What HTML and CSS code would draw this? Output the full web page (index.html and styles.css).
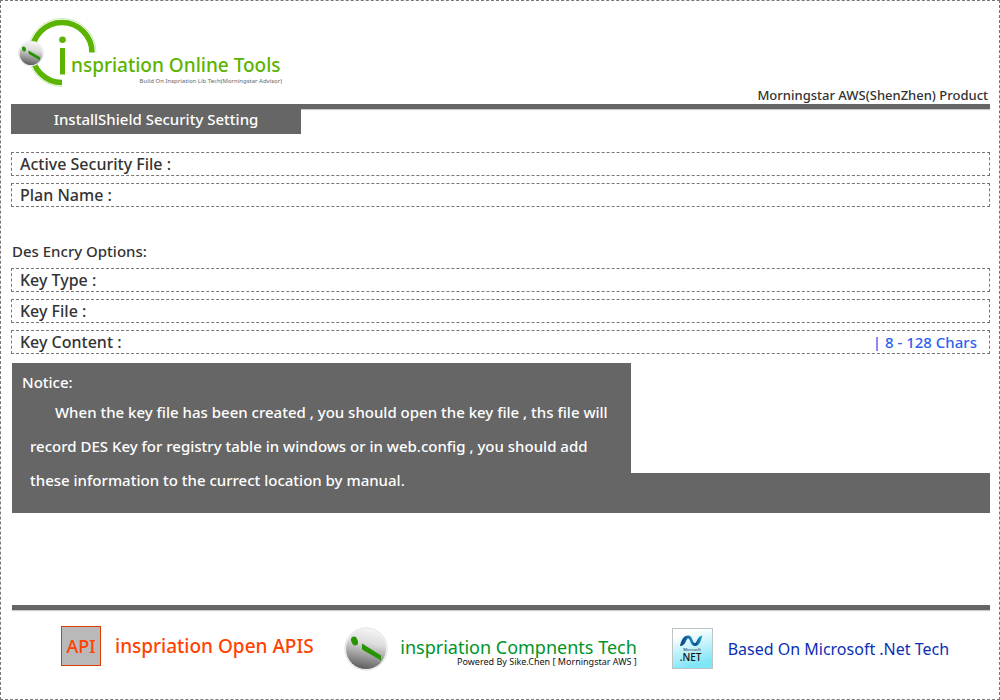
FILE: index.html
```html
<!DOCTYPE html>
<html lang="en">
<head>
<meta charset="utf-8">
<title>Inspriation Online Tools</title>
<link rel="stylesheet" href="styles.css">
</head>
<body>
<div class="page">
  <header class="header">
    <svg class="logo" width="290" height="80" viewBox="10 12 290 80" role="img" aria-label="Inspriation Online Tools">
      <defs>
        <linearGradient id="ball" x1="0.6" y1="0" x2="0.4" y2="1">
          <stop offset="0" stop-color="#f4f4f4"/>
          <stop offset="0.35" stop-color="#dcdcdc"/>
          <stop offset="1" stop-color="#5c5c5c"/>
        </linearGradient>
      </defs>
      <path d="M96 52.500A34 34 0 1 0 62 86.500" fill="none" stroke="#c9e8b4" stroke-width="1"/>
      <path d="M92 52.500A30 30 0 1 0 62 82.500" fill="none" stroke="#5ab400" stroke-width="5.500"/>
      <circle cx="62.500" cy="39.800" r="3.300" fill="#5ab400"/>
      <rect x="60" y="48" width="5" height="26.500" fill="#5ab400"/>
      <circle cx="31" cy="53.500" r="12.500" fill="#fff" stroke="#ddd" stroke-width="0.700"/>
      <circle cx="31" cy="53.500" r="11.500" fill="url(#ball)"/>
      <ellipse cx="24" cy="49" rx="1.900" ry="2.600" fill="#259400" transform="rotate(-20 24 49)"/>
      <path d="M28.500 50.500l11.500 6.700v3.200l-11.500-6.700z" fill="#259400"/>
      <text class="logo-name" x="71" y="72">nspriation Online Tools</text>
      <text class="logo-tag" x="282" y="83" text-anchor="end">Build On Inspriation Lib Tech(Morningstar Advisor)</text>
    </svg>
    <p class="product">Morningstar AWS(ShenZhen) Product</p>
  </header>

  <div class="rule"></div>
  <h1 class="tab">InstallShield Security Setting</h1>

  <form class="form">
    <div class="row"><label for="active-file">Active Security File :</label><input id="active-file" type="text"></div>
    <div class="row"><label for="plan-name">Plan Name :</label><input id="plan-name" type="text"></div>
    <h2 class="group">Des Encry Options:</h2>
    <div class="row"><label for="key-type">Key Type :</label><input id="key-type" type="text"></div>
    <div class="row"><label for="key-file">Key File :</label><input id="key-file" type="text"></div>
    <div class="row"><label for="key-content">Key Content :</label><input id="key-content" type="text"><span class="hint">| 8 - 128 Chars</span></div>
  </form>

  <section class="notice">
    <div class="notice-body">
      <h2 class="notice-title">Notice:</h2>
      <p class="notice-text">When the key file has been created , you should open the key file , ths file will<br>record DES Key for registry table in windows or in web.config , you should add<br>these information to the currect location by manual.</p>
    </div>
    <div class="notice-foot"></div>
  </section>

  <footer class="footer">
    <div class="rule"></div>
    <div class="brands">
      <div class="brand">
        <span class="api-icon">API</span>
        <span class="api-name">inspriation Open APIS</span>
      </div>
      <div class="brand">
        <svg width="44" height="44" viewBox="0 0 44 44" aria-hidden="true">
          <circle cx="22" cy="22" r="21.200" fill="#f4f4f4" stroke="#ddd" stroke-width="0.800"/>
          <circle cx="22" cy="22" r="20" fill="url(#ball)"/>
          <ellipse cx="10.500" cy="14" rx="3.200" ry="4.600" fill="#259400" transform="rotate(-20 10.500 14)"/>
          <path d="M18 16.500l19 12v5l-19-11z" fill="#259400"/>
        </svg>
        <div class="comp">
          <span class="comp-name">inspriation Compnents Tech</span>
          <span class="comp-by">Powered By Sike.Chen [ Morningstar AWS ]</span>
        </div>
      </div>
      <div class="brand">
        <svg width="42" height="42" viewBox="0 0 42 42" aria-hidden="true">
          <defs>
            <linearGradient id="tile" x1="0" y1="0" x2="0.300" y2="1">
              <stop offset="0.200" stop-color="#fff"/>
              <stop offset="1" stop-color="#7fe6f7"/>
            </linearGradient>
            <linearGradient id="wave" x1="0" y1="0" x2="1" y2="0">
              <stop offset="0" stop-color="#0a3c7c"/>
              <stop offset="0.500" stop-color="#1d86b8"/>
              <stop offset="0.700" stop-color="#0a4b8c"/>
              <stop offset="1" stop-color="#2cb0cc"/>
            </linearGradient>
          </defs>
          <rect x="0.500" y="0.500" width="40" height="40" fill="url(#tile)" stroke="#bcc4c6"/>
          <path d="M8 18C9.500 12 11.500 7.500 16 7.500c5 0 4 7.500 7 7.500 2 0 2-6.500 7.500-7.500C29 12 28 18 23 18c-5 0-4.500-7.500-7-7.500-2 0-2 7.500-8 7.500z" fill="url(#wave)"/>
          <text class="net-ms" x="20" y="23" text-anchor="middle">Microsoft</text>
          <text class="net-name" x="18.500" y="33" text-anchor="middle">.NET</text>
        </svg>
        <span class="net-label">Based On Microsoft .Net Tech</span>
      </div>
    </div>
  </footer>
</div>
</body>
</html>
```
FILE: styles.css
```css
* { box-sizing: border-box; }

body {
  margin: 0;
  background: #fff;
  color: #333;
  font-family: "Noto Sans", "Open Sans", sans-serif;
}

h1, h2, p { margin: 0; }

.page {
  display: flex;
  flex-direction: column;
  min-height: 100vh;
  padding: 11px 9px 0 10px;
  border: 1px dashed #777;
}

.header {
  display: flex;
  justify-content: space-between;
  align-items: flex-end;
  height: 92px;
}

.logo {
  align-self: flex-start;
  margin-left: -1px;
}

.logo-name { font-size: 19px; font-weight: 500; fill: #5ab400; }
.logo-tag { font-size: 6px; fill: #666; }

.product {
  padding-right: 2px;
  font-size: 13px;
  line-height: 18px;
  font-weight: 500;
}

.rule {
  height: 5px;
  background: #666;
  box-shadow: 0 1px 1px #ccc;
}

.tab {
  position: relative;
  width: 290px;
  height: 25px;
  background: #666;
  color: #fff;
  font-size: 15px;
  line-height: 21px;
  font-weight: 500;
  text-align: center;
}

.form {
  display: flex;
  flex-direction: column;
  gap: 7px;
  padding-top: 18px;
}

.row {
  display: flex;
  align-items: center;
  gap: 8px;
  height: 24px;
  padding: 0 12px 0 8px;
  border: 1px dashed #777;
  font-size: 16px;
  line-height: 22px;
}

.row label { font-weight: 500; }

.row input {
  flex: 1;
  min-width: 0;
  border: 0;
  padding: 0;
  background: transparent;
  font: inherit;
  outline: none;
}

.hint { color: #2b62f0; font-size: 15px; font-weight: 500; }

.group {
  padding: 27px 0 0 1px;
  font-size: 15px;
  line-height: 20px;
  font-weight: 500;
}

.notice {
  margin: 9px 0 0 1px;
  color: #fff;
  font-size: 15px;
  font-weight: 500;
}

.notice-body {
  width: 619px;
  max-width: 100%;
  padding: 9px 10px 0;
  background: #666;
}

.notice-title {
  font-size: 15px;
  line-height: 20px;
  font-weight: 500;
}

.notice-text {
  height: 81px;
  padding: 3px 0 0 8px;
  line-height: 34px;
  text-indent: 25px;
}

.notice-foot { height: 40px; background: #666; }

.footer { margin: auto 0 0 1px; }

.brands {
  display: grid;
  grid-template-columns: 283fr 327fr 318fr;
  height: 89px;
  padding: 0 0 12px 49px;
}

.brand {
  display: flex;
  align-items: center;
}

.brand:first-child { padding-bottom: 5px; }

.api-icon {
  width: 40px;
  height: 40px;
  border: 1px solid #e03c00;
  background: #b9b9b9;
  color: #ff4200;
  font-size: 18px;
  line-height: 38px;
  font-weight: 500;
  text-align: center;
}

.api-name {
  margin-left: 14px;
  color: #ff4200;
  font-size: 19px;
  font-weight: 500;
}

.comp {
  display: flex;
  flex-direction: column;
  align-items: flex-end;
  margin-left: 12px;
  padding-top: 6px;
}

.comp-name { color: #009428; font-size: 18px; line-height: 20px; }
.comp-by { color: #111; font-size: 9px; line-height: 10px; }

.net-ms { font-size: 4px; fill: #222; }
.net-name { font-size: 10px; font-weight: 500; fill: #111; }

.net-label {
  margin-left: 14px;
  color: #0a2fb4;
  font-size: 16px;
}
```
